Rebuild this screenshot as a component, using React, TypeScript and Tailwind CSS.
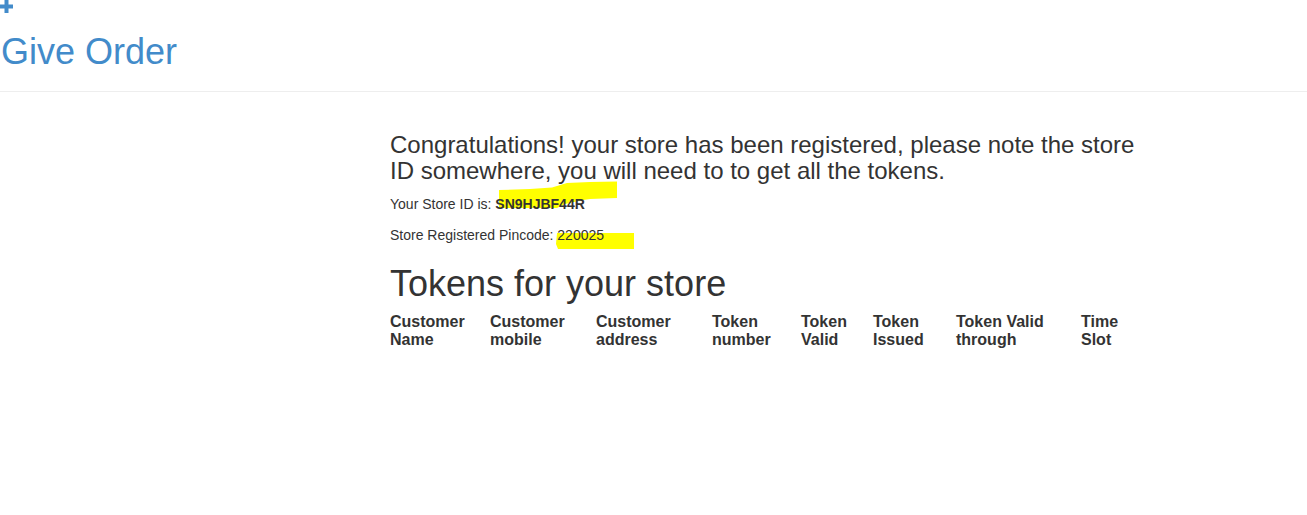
import React from "react";

const columns = [
  { label: ["Customer", "Name"], w: "w-[100px]" },
  { label: ["Customer", "mobile"], w: "w-[106px]" },
  { label: ["Customer", "address"], w: "w-[116px]" },
  { label: ["Token", "number"], w: "w-[89px]" },
  { label: ["Token", "Valid"], w: "w-[72px]" },
  { label: ["Token", "Issued"], w: "w-[83px]" },
  { label: ["Token Valid", "through"], w: "w-[125px]" },
  { label: ["Time", "Slot"], w: "w-[60px]" },
];

export default function App() {
  return (
    <div className="relative min-h-[515px] bg-white text-[#333] font-['Liberation_Sans',Arial,sans-serif]">
      {/* yellow marker scribbles */}
      <svg
        className="absolute left-0 top-0 pointer-events-none"
        width="1307"
        height="515"
        viewBox="0 0 1307 515"
      >
        <polygon
          points="499,190 530,189 552,187.5 567,183 590,182 617,181.5 617,198 590,199 583,200 565,204 557,208 499,208"
          fill="#ffff00"
        />
        <polygon
          points="557,233 634,233 634,249 558,249 556,244"
          fill="#ffff00"
        />
      </svg>

      <div className="relative">
        {/* header */}
        <div className="h-[14px]">
          <svg width="13" height="14" viewBox="0 0 13 14" className="block">
            <rect x="4.5" y="0" width="4" height="13" fill="#428bca" />
            <rect x="0" y="4.5" width="13" height="4" fill="#428bca" />
          </svg>
        </div>
        <h1 className="mt-[17.5px] pl-[1px] text-[36px] leading-[1.1] text-[#428bca]">
          Give Order
        </h1>
        <hr className="mt-[20px] border-0 border-t border-[#eee]" />

        {/* content */}
        <div className="pl-[390px]">
          <h3 className="mt-[39.7px] w-[760px] text-[24px] leading-[1.1]">
            Congratulations! your store has been registered, please note the store ID
            somewhere, you will need to to get all the tokens.
          </h3>
          <p className="mt-[9px] text-[14px] leading-[20px]">
            Your Store ID is: <b>SN9HJBF44R</b>
          </p>
          <p className="mt-[11px] text-[14px] leading-[20px]">
            Store Registered Pincode: 220025
          </p>
          <h2 className="mt-[19.4px] text-[36px] leading-[1.1]">Tokens for your store</h2>
          <div className="mt-[9.2px] flex text-[16px] leading-[18px] font-bold">
            {columns.map((c) => (
              <div key={c.label.join(" ")} className={c.w}>
                {c.label[0]}
                <br />
                {c.label[1]}
              </div>
            ))}
          </div>
        </div>
      </div>
    </div>
  );
}
